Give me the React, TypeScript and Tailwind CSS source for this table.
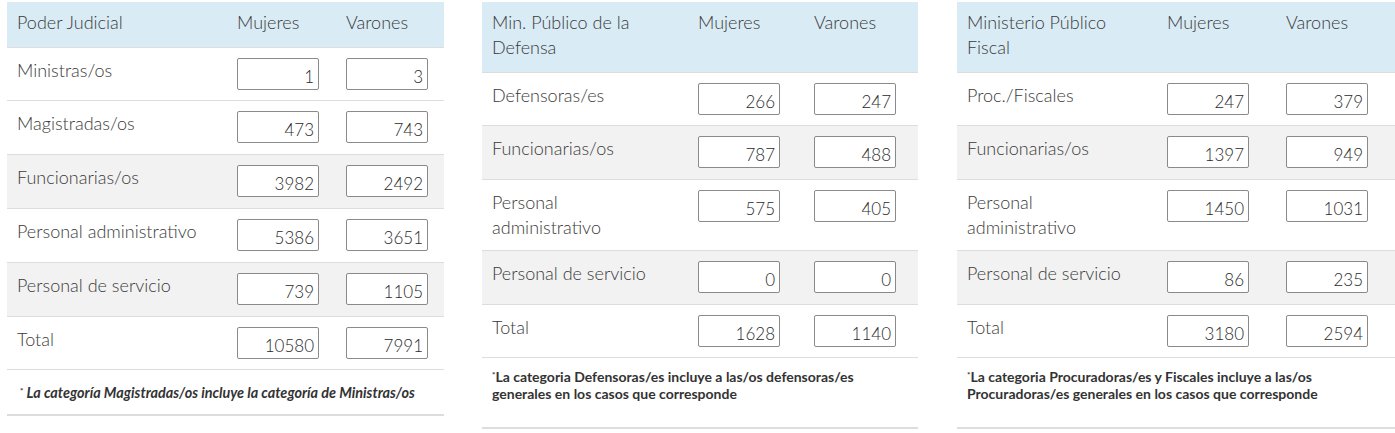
import React from "react";

type Row = { label: React.ReactNode; m: string; v: string; gray?: boolean; tight?: boolean };

const font = { fontFamily: "Lato, 'Open Sans', sans-serif" };

function Box({ value }: { value: string }) {
  return (
    <div className="w-[82px] h-[32px] border border-[#8a8a8a] rounded-[2px] bg-white flex items-center justify-end pr-[4px] pt-[4px] text-[17px] font-light text-[#2a2a2a] leading-none">
      {value}
    </div>
  );
}

function Table({
  widthClass,
  gridClass,
  title,
  rows,
  note,
  noteClass,
  noteBoxClass,
}: {
  widthClass: string;
  gridClass: string;
  title: React.ReactNode;
  rows: Row[];
  note: React.ReactNode;
  noteClass: string;
  noteBoxClass: string;
}) {
  return (
    <div className={widthClass}>
      <div className={`grid ${gridClass} bg-[#d9ebf5] text-[18px] leading-[25px] text-[#3a3a3a] font-light pt-[8px] pb-[12px]`}>
        <div className="pl-[10px] pr-[8px]">{title}</div>
        <div className="pl-[10px]">Mujeres</div>
        <div className="pl-[10px]">Varones</div>
      </div>
      {rows.map((r, i) => (
        <div
          key={i}
          className={`grid ${gridClass} border-t border-[#dddddd] pt-[10px] ${r.tight ? "pb-[10px]" : "pb-[11px]"} text-[18px] leading-[25px] text-[#3a3a3a] font-light ${r.gray ? "bg-[#f2f2f2]" : "bg-white"}`}
        >
          <div className="pl-[10px] pr-[8px]">{r.label}</div>
          <div className="pl-[10px] h-[32px]">
            <Box value={r.m} />
          </div>
          <div className="pl-[10px] h-[32px]">
            <Box value={r.v} />
          </div>
        </div>
      ))}
      <div className={`border-t border-[#dddddd] border-b-2 border-b-[#dddddd] ${noteBoxClass}`}>
        <p className={noteClass}>{note}</p>
      </div>
    </div>
  );
}

export default function App() {
  return (
    <div className="w-[1395px] h-[433px] bg-white overflow-hidden" style={font}>
      <div className="flex items-start pt-[2px] pl-[7px]">
        <Table
          widthClass="w-[437px] shrink-0"
          gridClass="grid-cols-[220px_109px_108px]"
          title="Poder Judicial"
          rows={[
            { label: "Ministras/os", m: "1", v: "3", tight: true },
            { label: "Magistradas/os", m: "473", v: "743" },
            { label: "Funcionarias/os", m: "3982", v: "2492", gray: true },
            { label: "Personal administrativo", m: "5386", v: "3651" },
            { label: "Personal de servicio", m: "739", v: "1105", gray: true },
            { label: "Total", m: "10580", v: "7991", tight: true },
          ]}
          note={
            <>
              <sup className="text-[8px] not-italic">*</sup> La categoría Magistradas/os incluye la categoría de Ministras/os
            </>
          }
          noteClass="text-[14.4px] leading-[17px] font-bold italic text-[#333]"
          noteBoxClass="h-[47px] pt-[14px] pl-[13px]"
        />
        <Table
          widthClass="w-[436px] shrink-0 ml-[38px]"
          gridClass="grid-cols-[206px_116px_114px]"
          title={
            <>
              Min. Público de la
              <br />
              Defensa
            </>
          }
          rows={[
            { label: "Defensoras/es", m: "266", v: "247", tight: true },
            { label: "Funcionarias/os", m: "787", v: "488", gray: true },
            {
              label: (
                <>
                  Personal
                  <br />
                  administrativo
                </>
              ),
              m: "575",
              v: "405",
              tight: true,
            },
            { label: "Personal de servicio", m: "0", v: "0", gray: true },
            { label: "Total", m: "1628", v: "1140", tight: true },
          ]}
          note={
            <>
              <sup className="text-[8px]">*</sup>La categoria Defensoras/es incluye a las/os defensoras/es
              <br />
              generales en los casos que corresponde
            </>
          }
          noteClass="text-[14px] leading-[17px] font-bold text-[#333]"
          noteBoxClass="h-[72px] pt-[10px] pl-[10px]"
        />
        <Table
          widthClass="w-[438px] shrink-0 ml-[39px]"
          gridClass="grid-cols-[200px_119px_119px]"
          title={
            <>
              Ministerio Público
              <br />
              Fiscal
            </>
          }
          rows={[
            { label: "Proc./Fiscales", m: "247", v: "379", tight: true },
            { label: "Funcionarias/os", m: "1397", v: "949", gray: true },
            {
              label: (
                <>
                  Personal
                  <br />
                  administrativo
                </>
              ),
              m: "1450",
              v: "1031",
              tight: true,
            },
            { label: "Personal de servicio", m: "86", v: "235", gray: true },
            { label: "Total", m: "3180", v: "2594", tight: true },
          ]}
          note={
            <>
              <sup className="text-[8px]">*</sup>La categoria Procuradoras/es y Fiscales incluye a las/os
              <br />
              Procuradoras/es generales en los casos que corresponde
            </>
          }
          noteClass="text-[14px] leading-[17px] font-bold text-[#333]"
          noteBoxClass="h-[72px] pt-[10px] pl-[10px]"
        />
      </div>
    </div>
  );
}
